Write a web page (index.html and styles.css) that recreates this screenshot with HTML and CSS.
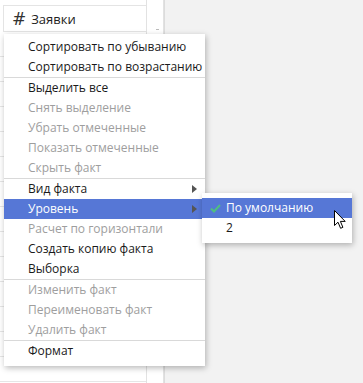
FILE: index.html
```html
<!DOCTYPE html>
<html lang="ru">
<head>
  <meta charset="UTF-8">
  <title>Заявки</title>
  <link rel="stylesheet" href="styles.css">
</head>
<body>
  <div class="sheet">
    <div class="col">
      <div class="head">
        <span class="hash">#</span>
        <span class="head-title">Заявки</span>
      </div>
      <div class="rows" id="rows"></div>
    </div>
    <div class="scroll"><span class="tick"></span></div>
  </div>

  <!-- контекстное меню -->
  <div class="menu">
    <div class="item">Сортировать по убыванию</div>
    <div class="item">Сортировать по возрастанию</div>
    <div class="sep"></div>
    <div class="item">Выделить все</div>
    <div class="item off">Снять выделение</div>
    <div class="item off">Убрать отмеченные</div>
    <div class="item off">Показать отмеченные</div>
    <div class="item off">Скрыть факт</div>
    <div class="sep"></div>
    <div class="item sub">Вид факта</div>
    <div class="item sub active">Уровень</div>
    <div class="item off">Расчет по горизонтали</div>
    <div class="item">Создать копию факта</div>
    <div class="item">Выборка</div>
    <div class="sep"></div>
    <div class="item off">Изменить факт</div>
    <div class="item off">Переименовать факт</div>
    <div class="item off">Удалить факт</div>
    <div class="sep"></div>
    <div class="item">Формат</div>
  </div>

  <div class="menu submenu">
    <div class="item active">
      <svg class="check" width="11" height="9" viewBox="0 0 11 9">
        <polyline points="1,4.5 4,7.5 10,1" fill="none" stroke="#4fbf80" stroke-width="2"/>
      </svg>
      По умолчанию
    </div>
    <div class="item">2</div>
  </div>

  <svg class="cursor" width="13" height="20" viewBox="0 0 13 20">
    <path d="M0.5 0.5 L0.5 15.5 L4 12.2 L6.6 18.3 L8.9 17.3 L6.4 11.4 L11.2 11.4 Z" fill="#fff" stroke="#000" stroke-width="1" stroke-linejoin="round"/>
  </svg>

  <script>
    const rows = document.getElementById('rows');
    for (let i = 0; i < 14; i++) {
      const r = document.createElement('div');
      r.className = 'row';
      rows.appendChild(r);
    }
  </script>
</body>
</html>
```

FILE: styles.css
```css
body {
  margin: 0;
  background: #f2f2f2;
  font-family: "Open Sans", "Noto Sans", sans-serif;
  font-size: 12px;
  color: #1a1a1a;
  height: 383px;
  overflow: hidden;
}
.sheet {
  display: flex;
  width: 164px;
  height: 383px;
  background: #fff;
  border-right: 1px solid #dcdcdc;
}
.col {
  width: 146px;
  border-right: 1px solid #e2e2e2;
  padding-top: 5px;
}
.head {
  height: 25px;
  margin-left: 3px;
  border: 1px solid #e4e4e4;
  border-right: none;
  display: flex;
  align-items: center;
  gap: 5px;
  padding-left: 8px;
  color: #222;
}
.hash {
  font-family: "DejaVu Sans", sans-serif;
  font-size: 17px;
  color: #333;
}
.head-title {
  font-size: 13px;
}
.row {
  height: 24px;
  border-bottom: 1px solid #e6e6e6;
}
.scroll {
  flex: 1;
  border-right: 1px solid #e2e2e2;
  position: relative;
}
.tick {
  position: absolute;
  left: 9px;
  top: 29px;
  width: 3px;
  height: 1px;
  background: #bbb;
}
.menu {
  position: absolute;
  left: 4px;
  top: 34px;
  width: 201px;
  padding: 3px 0 5px;
  background: #fff;
  box-shadow: 1px 2px 6px rgba(0, 0, 0, 0.28);
}
.item {
  height: 20px;
  line-height: 20px;
  padding-left: 24px;
  position: relative;
  white-space: nowrap;
}
.item.off {
  color: #9e9e9e;
}
.item.active {
  background: #5677d6;
  color: #fff;
}
.item.sub::after {
  content: "";
  position: absolute;
  right: 8px;
  top: 6px;
  border-left: 5px solid #555;
  border-top: 4px solid transparent;
  border-bottom: 4px solid transparent;
}
.sep {
  height: 1px;
  background: #d9d9d9;
}
.submenu {
  left: 202px;
  top: 193px;
  width: 150px;
  padding: 5px 0;
}
.check {
  position: absolute;
  left: 8px;
  top: 6px;
}
.cursor {
  position: absolute;
  left: 334px;
  top: 210px;
}
```
